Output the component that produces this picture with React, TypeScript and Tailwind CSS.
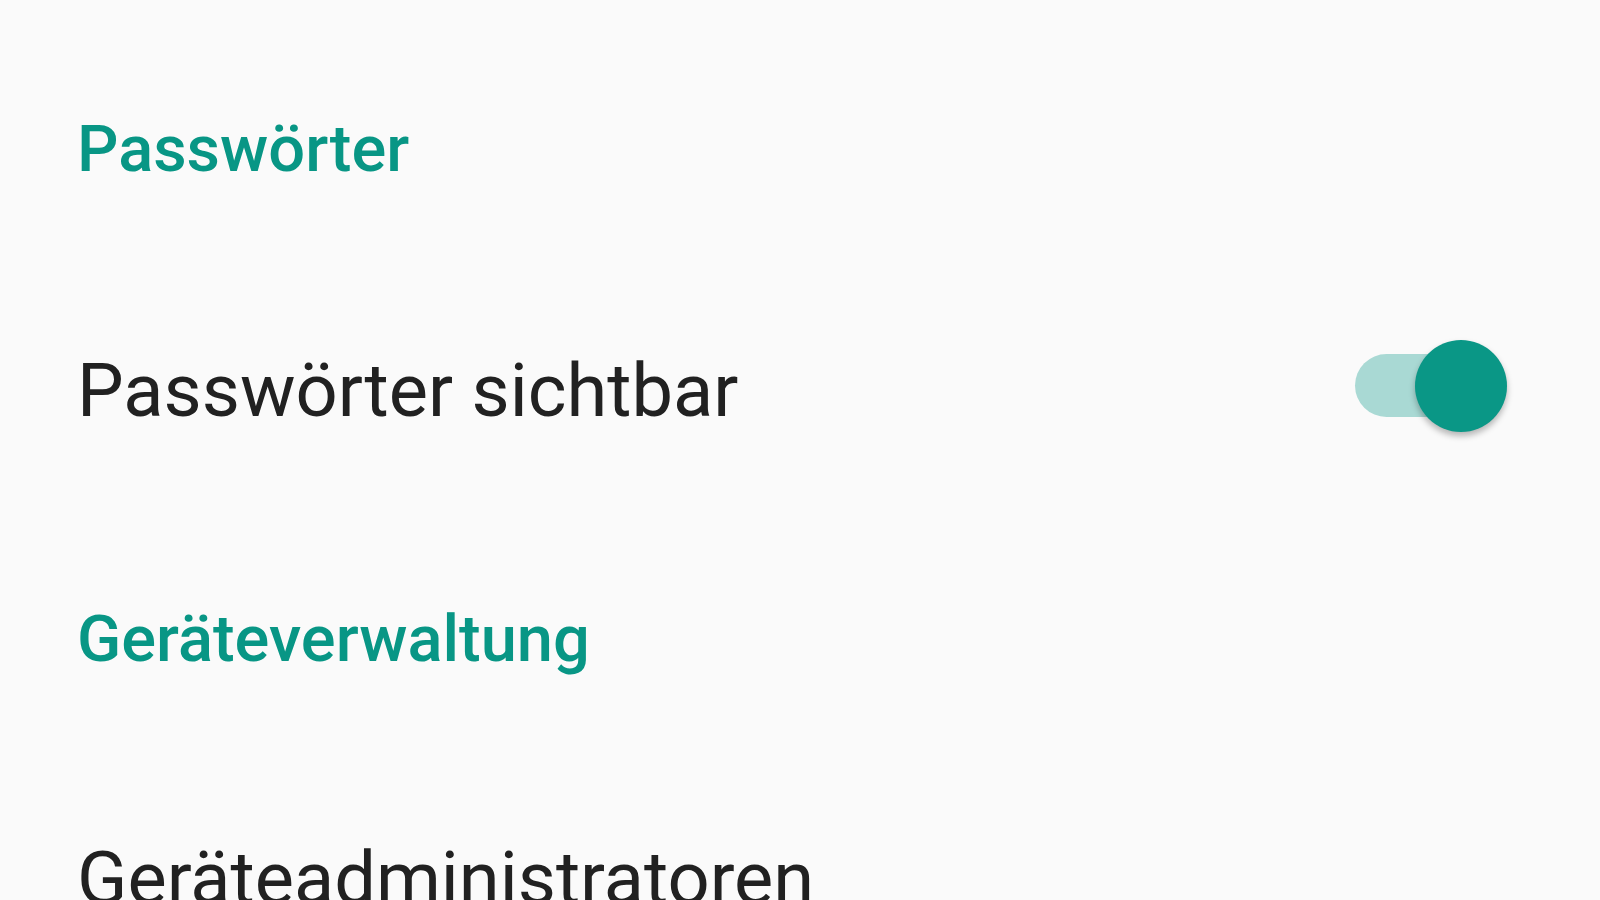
import React from 'react';

const Toggle: React.FC<{ on: boolean }> = ({ on }) => (
  <div className="relative w-[152px] h-[92px] shrink-0">
    <div className={`absolute left-0 top-[14px] h-[63px] w-[130px] rounded-full ${on ? 'bg-[#a9d9d4]' : 'bg-[#bdbdbd]'}`} />
    <div
      className={`absolute top-0 ${on ? 'right-0 bg-[#0a9786]' : 'left-0 bg-[#f1f1f1]'} w-[92px] h-[92px] rounded-full shadow-[0_4px_6px_rgba(0,0,0,0.28)]`}
    />
  </div>
);

export default function App() {
  return (
    <div className="w-[1600px] h-[900px] overflow-hidden bg-[#fafafa] font-['Roboto',sans-serif] pl-[77px] pr-[93px] pt-[117px]">
      <h2 className="text-[65px] leading-none font-medium text-[#089685] h-[65px]">Passwörter</h2>

      <div className="mt-[158px] flex justify-between items-start">
        <span className="mt-[14px] text-[74px] leading-none text-[#212121]">Passwörter sichtbar</span>
        <Toggle on />
      </div>

      <h2 className="mt-[175px] text-[65px] leading-none font-medium text-[#089685] h-[65px]">Geräteverwaltung</h2>

      <div className="mt-[170px] whitespace-nowrap">
        <span className="text-[74px] leading-none text-[#212121]">Geräteadministratoren</span>
      </div>
    </div>
  );
}
